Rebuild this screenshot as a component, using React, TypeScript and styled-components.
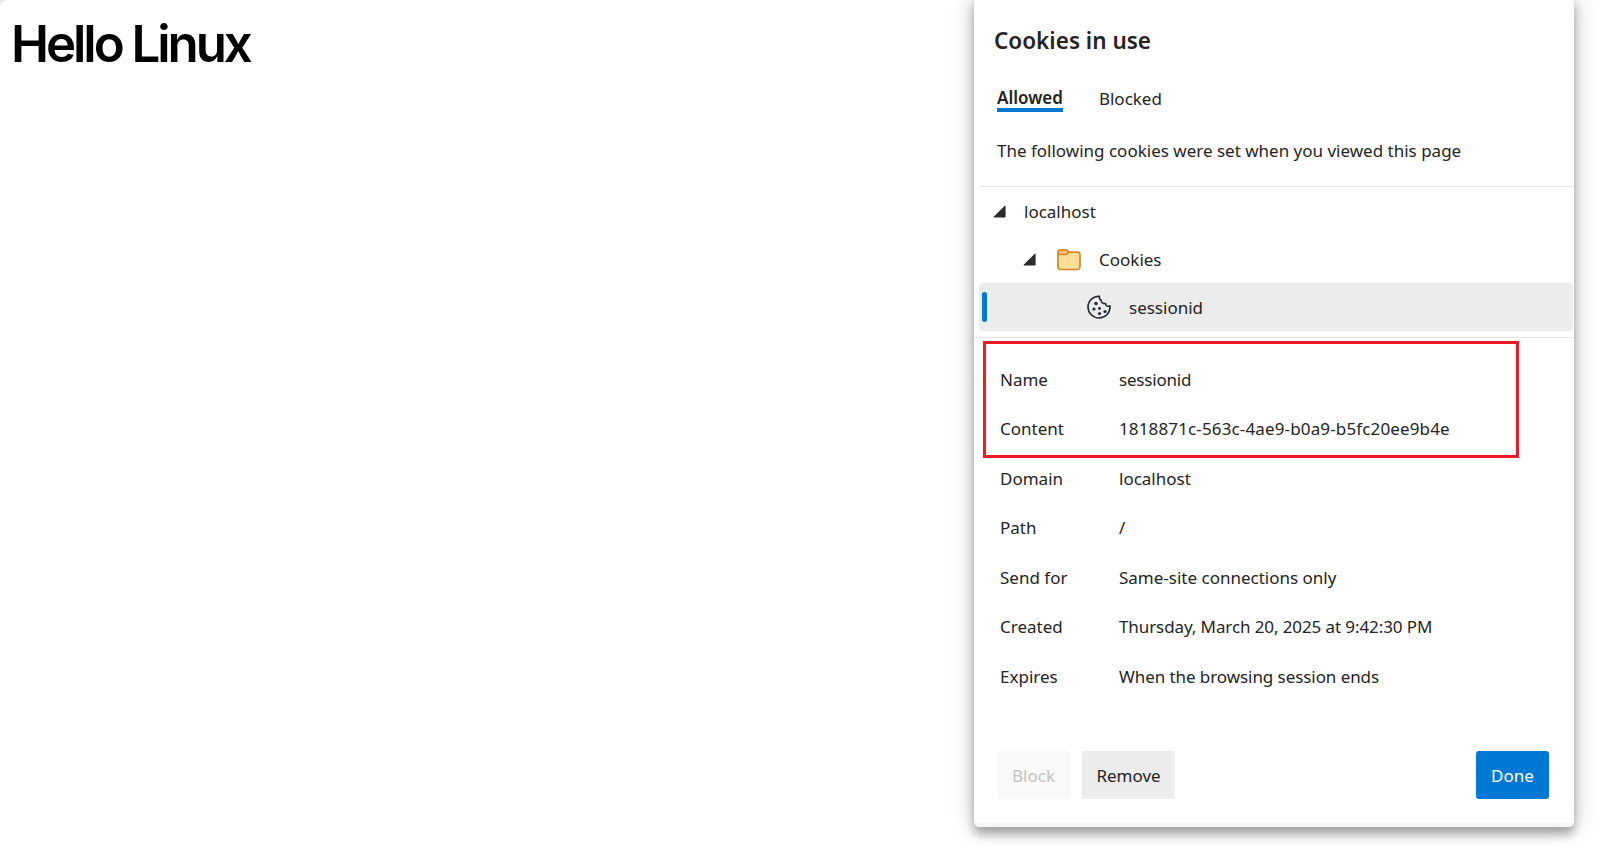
import React from "react";
import styled, { createGlobalStyle } from "styled-components";

const Global = createGlobalStyle`
  html, body { margin: 0; padding: 0; height: 100%; background: #e9e9e9; overflow: hidden; }
  #root { height: 100%; }
  * { box-sizing: border-box; }
`;

const Page = styled.div`
  position: relative;
  height: 849px;
  width: 1598px;
  background: #fff;
  border-top-left-radius: 8px;
  padding: 16px 11px;
  font-family: "Noto Sans", "Open Sans", sans-serif;
`;

const Heading = styled.h1`
  margin: 0;
  font-family: Inter, sans-serif;
  font-size: 51px;
  line-height: 56px;
  font-weight: 600;
  letter-spacing: -0.06em;
  color: #000;
`;

const Dialog = styled.section`
  position: absolute;
  left: 974px;
  top: -4px;
  width: 600px;
  height: 831px;
  background: #fff;
  border-radius: 8px 8px 5px 5px;
  border-bottom: 4px solid #f7f7f7;
  box-shadow: 0 7px 10px rgba(0, 0, 0, 0.3), 0 0 24px rgba(0, 0, 0, 0.22);
  display: flex;
  flex-direction: column;
  color: #242424;
  font-size: 17px;
`;

const Title = styled.h2`
  margin: 0;
  padding: 29px 0 0 20px;
  height: 86px;
  font-size: 22.5px;
  line-height: 32px;
  font-weight: 600;
  color: #242424;
`;

const Tabs = styled.div`
  display: flex;
  gap: 36px;
  padding-left: 23px;
  height: 32px;
`;

const Tab = styled.div<{ $active?: boolean }>`
  height: 30px;
  line-height: ${(p) => (p.$active ? "31px" : "34px")};
  font-weight: ${(p) => (p.$active ? 600 : 400)};
  border-bottom: ${(p) => (p.$active ? "4px solid #0078d4" : "none")};
  font-size: 17px;
`;

const Description = styled.p`
  margin: 0 0 0 5px;
  padding: 25px 0 0 18px;
  height: 73px;
  line-height: 24px;
  font-size: 17px;
  border-bottom: 1px solid #e6e6e6;
`;

const Tree = styled.div`
  display: flex;
  flex-direction: column;
  padding: 0 1px 0 5px;
  height: 151px;
  border-bottom: 1px solid #e6e6e6;
`;

const TreeRow = styled.div<{ $indent: number; $selected?: boolean }>`
  position: relative;
  height: 48px;
  flex: none;
  display: flex;
  align-items: center;
  padding-left: ${(p) => p.$indent}px;
  background: ${(p) => (p.$selected ? "#ececec" : "transparent")};
  border-radius: 4px;
`;

const SelectedMark = styled.span`
  position: absolute;
  left: 3px;
  top: 9px;
  width: 5px;
  height: 30px;
  border-radius: 2.5px;
  background: #0078d4;
`;

const Arrow = styled.svg`
  width: 13px;
  height: 13px;
  flex: none;
  fill: #2b2b2b;
`;

const RowIcon = styled.svg<{ $gap?: number }>`
  width: 26px;
  height: 26px;
  flex: none;
  margin-left: ${(p) => p.$gap ?? 0}px;
`;

const RowLabel = styled.span<{ $gap: number }>`
  margin-left: ${(p) => p.$gap}px;
`;

const Details = styled.div`
  position: relative;
  display: flex;
  flex-direction: column;
  flex: 1;
  padding-top: 16.5px;
`;

const Annotation = styled.div`
  position: absolute;
  left: 9px;
  top: 3px;
  width: 536px;
  height: 117px;
  border: 3px solid #ed1c24;
`;

const DetailRow = styled.div`
  display: grid;
  grid-template-columns: 119px 1fr;
  height: 49.5px;
  align-items: center;
  padding-left: 26px;
`;

const DetailValue = styled.span<{ $tracking?: number }>`
  letter-spacing: ${(p) => p.$tracking ?? 0}px;
`;

const Footer = styled.div`
  display: flex;
  align-items: center;
  gap: 12px;
  padding: 0 25px 24px 23px;
`;

const Button = styled.button<{ $kind: "disabled" | "plain" | "primary" }>`
  height: 48px;
  border: none;
  border-radius: 3px;
  font: inherit;
  font-size: 17px;
  padding: 0;
  width: ${(p) => (p.$kind === "plain" ? "93px" : "73px")};
  margin-left: ${(p) => (p.$kind === "primary" ? "auto" : "0")};
  background: ${(p) =>
    p.$kind === "primary" ? "#0078d4" : p.$kind === "plain" ? "#ececec" : "#f9f9f9"};
  color: ${(p) =>
    p.$kind === "primary" ? "#fff" : p.$kind === "plain" ? "#242424" : "#c4c4c4"};
`;

const TriangleIcon = () => (
  <Arrow viewBox="0 0 13 13">
    <path d="M12.600 1.100V11.800a.7.7 0 0 1-.7.7H1a.5.5 0 0 1-.35-.85L11.750.75a.5.5 0 0 1 .85.35z" />
  </Arrow>
);

const FolderIcon = () => (
  <RowIcon viewBox="0 0 26 26" $gap={20}>
    <path
      d="M2 6.500A2.500 2.500 0 0 1 4.500 4h5c1.200 0 1.600.6 2.200 1.500.3.5.7.7 1.300.7h8.500A2.500 2.500 0 0 1 24 8.700v12.300a2.500 2.500 0 0 1-2.500 2.500h-17A2.500 2.500 0 0 1 2 21z"
      fill="#ffdf99"
      stroke="#d6872a"
      strokeWidth="1.700"
    />
    <path
      d="M2 6.500A2.500 2.500 0 0 1 4.500 4h5c1.700 0 2.700 1 2.700 2.200 0 1.200-1 2.300-2.700 2.300H2z"
      fill="#f5bf6b"
      stroke="#d6872a"
      strokeWidth="1.500"
    />
  </RowIcon>
);

const CookieIcon = () => (
  <RowIcon viewBox="0 0 26 26">
    <path
      d="M13.500 2.200C7.400 2 2 6.700 2 13c0 6 4.900 11 11 11s11-4.900 11-11c0-.5 0-.9-.1-1.300-1 .8-2.800.8-3.700-.3-.6-.8-.7-1.300-.7-1.900-2.300.4-4.400-1.200-4.500-3.400-1.400-.6-2-2.500-1.500-3.900z"
      fill="none"
      stroke="#242a35"
      strokeWidth="1.600"
      strokeLinejoin="round"
    />
    <g fill="#242a35">
      <circle cx="10" cy="9.500" r="1.800" />
      <circle cx="8" cy="15" r="1.600" />
      <circle cx="13.500" cy="14.500" r="1.400" />
      <circle cx="13.500" cy="19.500" r="1.600" />
      <circle cx="19" cy="17.500" r="1.600" />
    </g>
  </RowIcon>
);

const details: { label: string; value: string; tracking?: number }[] = [
  { label: "Name", value: "sessionid", tracking: -0.2 },
  { label: "Content", value: "1818871c-563c-4ae9-b0a9-b5fc20ee9b4e", tracking: 0.14 },
  { label: "Domain", value: "localhost" },
  { label: "Path", value: "/" },
  { label: "Send for", value: "Same-site connections only" },
  { label: "Created", value: "Thursday, March 20, 2025 at 9:42:30 PM", tracking: -0.1 },
  { label: "Expires", value: "When the browsing session ends", tracking: -0.07 },
];

export default function App() {
  return (
    <Page>
      <Global />
      <Heading>Hello Linux</Heading>
      <Dialog>
        <Title>Cookies in use</Title>
        <Tabs>
          <Tab $active>Allowed</Tab>
          <Tab>Blocked</Tab>
        </Tabs>
        <Description>The following cookies were set when you viewed this page</Description>
        <Tree>
          <TreeRow $indent={14}>
            <TriangleIcon />
            <RowLabel $gap={18}>localhost</RowLabel>
          </TreeRow>
          <TreeRow $indent={44}>
            <TriangleIcon />
            <FolderIcon />
            <RowLabel $gap={17}>Cookies</RowLabel>
          </TreeRow>
          <TreeRow $indent={107} $selected>
            <SelectedMark />
            <CookieIcon />
            <RowLabel $gap={17}>sessionid</RowLabel>
          </TreeRow>
        </Tree>
        <Details>
          <Annotation />
          {details.map((d) => (
            <DetailRow key={d.label}>
              <span>{d.label}</span>
              <DetailValue $tracking={d.tracking}>{d.value}</DetailValue>
            </DetailRow>
          ))}
        </Details>
        <Footer>
          <Button $kind="disabled" disabled>Block</Button>
          <Button $kind="plain">Remove</Button>
          <Button $kind="primary">Done</Button>
        </Footer>
      </Dialog>
    </Page>
  );
}
